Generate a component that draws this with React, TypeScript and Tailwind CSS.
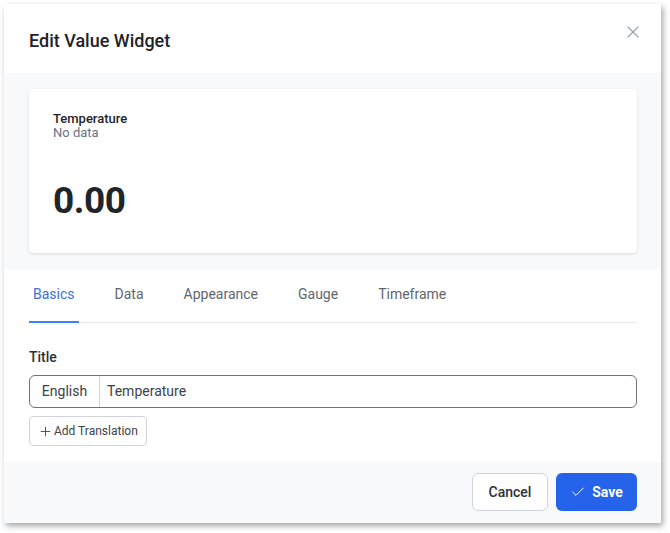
import { X, Check, Plus } from 'lucide-react';

const tabs = ['Basics', 'Data', 'Appearance', 'Gauge', 'Timeframe'];

export default function App() {
    return (
        <div className="w-[670px] h-[533px] bg-white pl-[4px] pt-[4px] font-['Roboto',sans-serif]">
            <div className="w-[657px] h-[519px] bg-white flex flex-col shadow-[2px_3px_6px_rgba(0,0,0,0.35)]">
                {/* header */}
                <div className="h-[69px] shrink-0 flex items-center justify-between pl-[25px] pr-[18px]">
                    <h2 className="text-[18px] font-medium text-[#1f2328] pt-[3px]">Edit Value Widget</h2>
                    <button className="text-[#9ca3af] -mt-[14px]">
                        <X size={20} strokeWidth={1.5} />
                    </button>
                </div>

                {/* preview */}
                <div className="h-[196px] shrink-0 bg-[#f8f9fb] pl-[25px] pr-[24px] py-[16px]">
                    <div className="h-full bg-white rounded-[4px] shadow-[0_1px_3px_rgba(0,0,0,0.12)] px-[24px] pt-[23px]">
                        <div className="text-[13px] font-medium text-[#1f2328] leading-[14px]">Temperature</div>
                        <div className="text-[13px] text-[#6b7280] leading-[14px]">No data</div>
                        <div className="text-[37px] font-bold text-[#212529] leading-none mt-[42px] tracking-[-0.5px]">0.00</div>
                    </div>
                </div>

                {/* body */}
                <div className="flex-1 pl-[25px] pr-[24px]">
                    <div className="flex gap-8 border-b border-[#e5e7eb] h-[54px]">
                        {tabs.map((tab, i) => (
                            <div
                                key={tab}
                                className={`px-1 pt-[15px] text-[14px] ${i === 0 ? 'text-[#3b6fe0] border-b-2 border-[#3b82f6] -mb-px' : 'text-[#5f6670]'}`}
                            >
                                {tab}
                            </div>
                        ))}
                    </div>

                    <div className="mt-[26px] text-[14px] font-medium text-[#2d3036] leading-[16px]">Title</div>

                    <div className="mt-[10px] h-[33px] flex items-stretch border border-[#6b7280] rounded-[6px] text-[14px] text-[#3d4249]">
                        <div className="w-[70px] flex items-center justify-center border-r border-[#d1d5db]">English</div>
                        <div className="flex items-center pl-[7px]">Temperature</div>
                    </div>

                    <button className="mt-[8px] h-[30px] pl-[8px] pr-[8px] flex items-center gap-[1px] border border-[#d1d5db] rounded-[4px] text-[12px] text-[#3d4249]">
                        <Plus size={15} strokeWidth={1.4} />
                        Add Translation
                    </button>
                </div>

                {/* footer */}
                <div className="h-[61px] shrink-0 bg-[#f8f9fb] flex items-start justify-end gap-[8px] pr-[24px] pt-[11px]">
                    <button className="h-[38px] w-[76px] bg-white border border-[#d1d5db] rounded-[6px] text-[14px] font-medium text-[#2d3036]">
                        Cancel
                    </button>
                    <button className="h-[38px] w-[81px] bg-[#2563eb] rounded-[6px] text-[14px] font-bold text-white flex items-center justify-center gap-[6px]">
                        <Check size={16} strokeWidth={1.5} />
                        Save
                    </button>
                </div>
            </div>
        </div>
    );
}
